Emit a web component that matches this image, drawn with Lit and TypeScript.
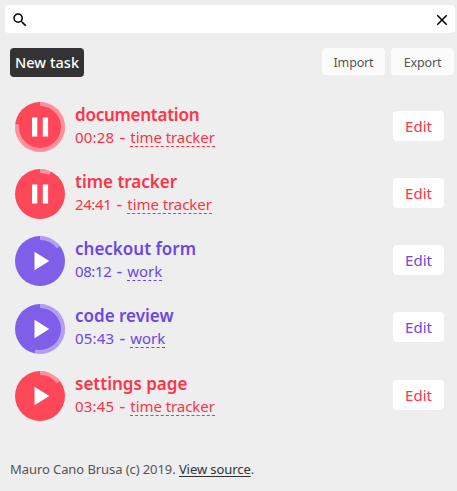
import { LitElement, html, svg, css } from "lit";
import { customElement, property, state } from "lit/decorators.js";
import { classMap } from "lit/directives/class-map.js";

interface Task {
  title: string;
  time: string;
  project: string;
  progress: number;
  running: boolean;
}

@customElement("progress-button")
class ProgressButton extends LitElement {
  @property({ type: Number }) progress = 0;
  @property({ type: Boolean }) running = false;

  static styles = css`
    :host { display: block; width: 50px; height: 50px; flex: none; }
    svg { display: block; }
    .disc { fill: currentColor; }
    .ring { fill: none; stroke: #fff; stroke-opacity: 0.4; stroke-width: 4; }
    .glyph { fill: #fff; }
  `;

  render() {
    const length = 2 * Math.PI * 23;
    return html`<svg width="50" height="50" viewBox="0 0 50 50">
      <circle class="disc" cx="25" cy="25" r="25"></circle>
      <circle class="ring" cx="25" cy="25" r="23" transform="rotate(-90 25 25)"
        stroke-dasharray="${this.progress * length} ${length}"></circle>
      ${this.running
        ? svg`<path class="glyph" d="M17 15.5h5.3v19H17zM27.8 15.5h5.3v19h-5.3z"/>`
        : svg`<path class="glyph" d="M19.5 15.7v18.6L34.3 25z"/>`}
    </svg>`;
  }
}

@customElement("app-root")
class AppRoot extends LitElement {
  @state() private tasks: Task[] = [
    { title: "documentation", time: "00:28", project: "time tracker", progress: 0.765, running: true },
    { title: "time tracker", time: "24:41", project: "time tracker", progress: 0.072, running: true },
    { title: "checkout form", time: "08:12", project: "work", progress: 0.147, running: false },
    { title: "code review", time: "05:43", project: "work", progress: 0.533, running: false },
    { title: "settings page", time: "03:45", project: "time tracker", progress: 0.147, running: false },
  ];

  static styles = css`
    :host {
      display: flex; flex-direction: column; box-sizing: border-box;
      height: 491px; padding: 5px 2px 0 5px; overflow: hidden;
      background: #eee; color: #555; font-family: "Noto Sans", sans-serif;
    }
    button { font: inherit; border: 0; margin: 0; padding: 0 0 2px; border-radius: 4px; white-space: nowrap; }
    .search {
      display: flex; align-items: center; justify-content: space-between;
      box-sizing: border-box; height: 28px; flex: none; padding: 1px 4px 0 6px;
      background: #fff; border-radius: 4px;
    }
    .search svg { display: block; fill: #000; }
    .toolbar { display: flex; align-items: flex-start; gap: 6px; height: 29px; margin: 15px 1px 0 5px; }
    .new { width: 74px; height: 29px; margin-right: auto; background: #333; color: #fff; font-size: 14.5px; font-weight: 500; letter-spacing: 0.05px; }
    .file { width: 63px; height: 27px; padding: 1px 0 0; background: #fbfbfb; color: #555; font-size: 12.5px; letter-spacing: -0.15px; }
    .tasks { margin: 16.15px 11px 0 10px; }
    .task { display: flex; align-items: center; height: 67.25px; }
    .time-tracker { color: #ff3348; }
    .work { color: #6c47e5; }
    .time-tracker progress-button { color: #ff475a; }
    .work progress-button { color: #7f5ee9; }
    .info { flex: 1; margin: 0 0 4.4px 10px; white-space: nowrap; }
    .title { font-size: 17px; font-weight: 600; line-height: 24px; }
    .long-word { letter-spacing: -0.25px; }
    .meta { display: flex; font-size: 15px; line-height: 20px; }
    .time { letter-spacing: 0.2px; }
    .narrow { letter-spacing: -0.4px; }
    .dash { width: 16px; text-align: center; font-size: 18px; }
    .project { line-height: 20px; height: 19px; letter-spacing: -0.07px; border-bottom: 1px dashed currentColor; }
    .edit { width: 51px; height: 30px; margin-bottom: 2.1px; padding: 0; background: #fff; color: inherit; font-size: 15px; }
    .footer { margin: 30px 0 0 5px; font-size: 13px; line-height: 20px; letter-spacing: -0.08px; white-space: nowrap; }
    .source { color: #333; text-decoration: underline; text-underline-offset: 2px; }
  `;

  render() {
    return html`
      <div class="search">
        <svg width="18" height="18" viewBox="0 0 24 24"><path d="M15.5 14h-.79l-.28-.27A6.47 6.47 0 0 0 16 9.5 6.5 6.5 0 1 0 9.5 16c1.61 0 3.09-.59 4.23-1.57l.27.28v.79l5 4.99L20.49 19l-4.99-5zm-6 0C7.01 14 5 11.99 5 9.5S7.01 5 9.5 5 14 7.01 14 9.5 11.99 14 9.5 14z"/></svg>
        <svg width="18" height="18" viewBox="0 0 24 24"><path d="M19 6.41L17.59 5 12 10.59 6.41 5 5 6.41 10.59 12 5 17.59 6.41 19 12 13.41 17.59 19 19 17.59 13.41 12z"/></svg>
      </div>
      <div class="toolbar">
        <button class="new">New task</button>
        <button class="file">Import</button>
        <button class="file">Export</button>
      </div>
      <div class="tasks">
        ${this.tasks.map((task) => html`
          <div class=${classMap({ task: true, work: task.project === "work", "time-tracker": task.project !== "work" })}>
            <progress-button .progress=${task.progress} .running=${task.running}></progress-button>
            <div class="info">
              <div class=${classMap({ title: true, "long-word": !task.title.includes(" ") })}>${task.title}</div>
              <div class="meta">
                <span class=${classMap({ time: true, narrow: task.time.includes("1") })}>${task.time}</span>
                <span class="dash">-</span>
                <span class="project">${task.project}</span>
              </div>
            </div>
            <button class="edit">Edit</button>
          </div>`)}
      </div>
      <div class="footer">Mauro Cano Brusa (c) 2019. <span class="source">View source</span>.</div>
    `;
  }
}
